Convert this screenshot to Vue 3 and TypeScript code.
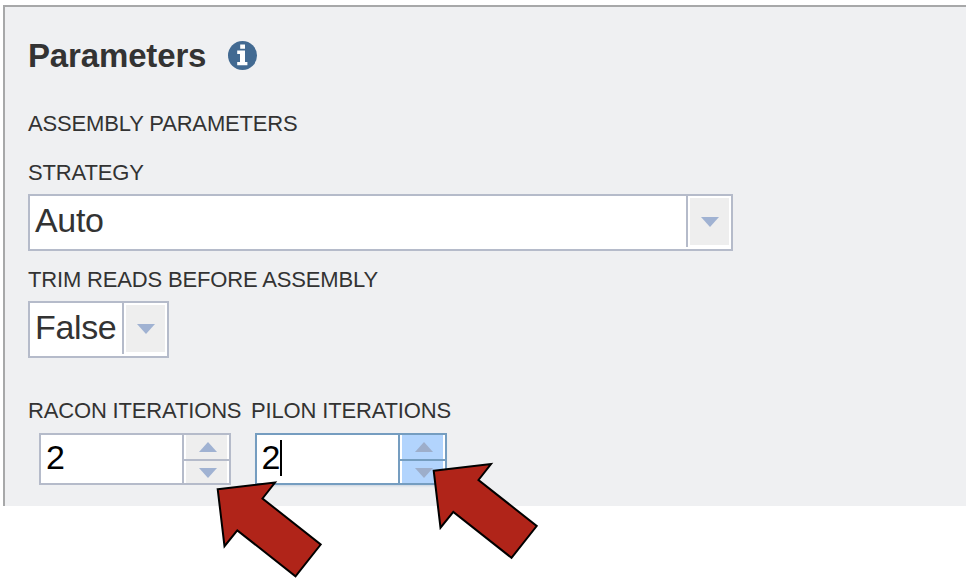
<script setup lang="ts">
import { ref } from 'vue'

interface Choice {
  id: string
  label: string
  value: string
}

interface Counter {
  id: string
  label: string
  value: number
  active: boolean
}

const choices = ref<Choice[]>([
  { id: 'strategy', label: 'STRATEGY', value: 'Auto' },
  { id: 'trim', label: 'TRIM READS BEFORE ASSEMBLY', value: 'False' },
])

const counters = ref<Counter[]>([
  { id: 'racon', label: 'RACON ITERATIONS', value: 2, active: false },
  { id: 'pilon', label: 'PILON ITERATIONS', value: 2, active: true },
])

function step(counter: Counter, amount: number) {
  counter.value = Math.max(0, counter.value + amount)
}
</script>

<template>
  <main class="page">
    <section class="panel">
      <header class="heading">
        <h1 class="title">Parameters</h1>
        <svg class="info" viewBox="0 0 29 29">
          <circle cx="14.5" cy="14.5" r="14.5" />
          <path d="M12.2 3.4h4.8v4.4h-4.8z M9.2 9.6h7.8v11.3h2.4v3.4H9.2v-3.4h2.8v-7.9H9.2z" />
        </svg>
      </header>

      <p class="label section">ASSEMBLY PARAMETERS</p>

      <div v-for="choice in choices" :key="choice.id" class="field" :class="choice.id">
        <span class="label">{{ choice.label }}</span>
        <div class="select">
          <span class="value">{{ choice.value }}</span>
          <span class="divider"></span>
          <button class="drop" type="button">
            <svg class="caret" viewBox="0 0 18 10"><path d="M0 0h18L9 10z" /></svg>
          </button>
        </div>
      </div>

      <div class="counters">
        <div v-for="counter in counters" :key="counter.id" class="counter" :class="[counter.id, { active: counter.active }]">
          <span class="label">{{ counter.label }}</span>
          <div class="spinner">
            <span class="number">{{ counter.value }}<i v-if="counter.active" class="cursor"></i></span>
            <span class="steps">
              <button class="step" type="button" @click="step(counter, 1)">
                <svg class="caret" viewBox="0 0 18 10"><path d="M0 10h18L9 0z" /></svg>
              </button>
              <button class="step down" type="button" @click="step(counter, -1)">
                <svg class="caret" viewBox="0 0 18 10"><path d="M0 0h18L9 10z" /></svg>
              </button>
            </span>
          </div>
        </div>
      </div>
    </section>

    <svg class="pointers" viewBox="0 0 974 586">
      <path d="M217.7 489.2L275 482.5L262.5 498.5L320.7 544.5L295.5 576.3L237.3 530.4L224.5 546.2Z" />
      <path d="M433.7 470.7L491 464L478.5 480L536.7 526L511.5 557.8L453.3 511.9L440.5 527.7Z" />
    </svg>
  </main>
</template>

<style>
body {
  margin: 0;
  background: #fff;
}
</style>

<style scoped>
.page {
  position: relative;
  box-sizing: border-box;
  width: 974px;
  height: 586px;
  padding: 5px 8px 0 3px;
  overflow: hidden;
  font-family: "Liberation Sans", Arial, sans-serif;
  color: #333;
}

.panel {
  box-sizing: border-box;
  height: 501px;
  padding: 29px 0 0 23px;
  border-top: 2px solid #a7a8a9;
  border-left: 2px solid #a7a8a9;
  background: #eff0f2;
}

.heading {
  display: flex;
  gap: 21px;
  height: 40px;
}

.title {
  margin: 0;
  font-size: 33px;
  line-height: 40px;
  font-weight: 700;
  letter-spacing: -0.15px;
  width: 179px;
}

.info {
  width: 29px;
  height: 29px;
  margin-top: 5px;
  fill: #426a92;
}

.info path {
  fill: #fff;
}

.label {
  display: block;
  margin: 0;
  font-size: 22px;
  line-height: 26px;
  letter-spacing: -0.16px;
  white-space: nowrap;
}

.section {
  margin-top: 35px;
}

.field {
  margin-top: 23px;
}

.trim {
  margin-top: 16px;
}

.select {
  box-sizing: border-box;
  display: flex;
  width: 705px;
  height: 57px;
  margin-top: 8px;
  border: 2px solid #b5bbca;
  background: #fff;
}

.trim .select {
  width: 141px;
}

.value {
  flex: 1;
  padding-left: 5px;
  font-size: 34px;
  line-height: 49px;
  letter-spacing: -0.35px;
}

.divider {
  width: 2px;
  height: 51px;
  background: #b5bbca;
}

.drop {
  display: flex;
  align-items: center;
  justify-content: center;
  width: 39px;
  height: 47px;
  margin: 2px 2px 0;
  padding: 0;
  border: 0;
  background: #eee;
}

.caret {
  display: block;
  width: 18px;
  height: 10px;
  fill: #a0b2d2;
}

.counters {
  display: flex;
  margin-top: 40px;
}

.counter {
  width: 223px;
}

.spinner {
  box-sizing: border-box;
  display: flex;
  width: 192px;
  height: 52px;
  margin: 9px 0 0 11px;
  border: 2px solid #b5bbca;
  background: #fff;
}

.pilon .spinner {
  margin-left: 4px;
}

.number {
  display: flex;
  flex: 1;
  padding-left: 5px;
  color: #000;
  font-size: 34px;
  line-height: 45px;
}

.pilon .number {
  padding-left: 4.5px;
}

.cursor {
  width: 2px;
  height: 36px;
  margin-top: 5px;
  background: #000;
}

.steps {
  display: flex;
  flex-direction: column;
  width: 45px;
  border-left: 2px solid #b5bbca;
}

.step {
  box-sizing: border-box;
  display: flex;
  align-items: center;
  justify-content: center;
  height: 24px;
  padding: 0 0 0 3px;
  border: 0;
  border-left: 2px solid #fff;
  border-right: 2px solid #fff;
  background: #eee;
}

.down {
  height: 22px;
  margin-top: 2px;
  padding-top: 1px;
  box-shadow: 0 -2px #b5bbca;
}

.active .spinner,
.active .steps {
  border-color: #759dc0;
}

.active .spinner {
  box-shadow: 0 2px 2px -1px #c9d3df;
}

.active .step {
  background: #b2d4fd;
}

.active .down {
  box-shadow: 0 -2px #759dc0;
}

.active .caret {
  fill: #9daecb;
}

.pointers {
  position: absolute;
  left: 0;
  top: 0;
  width: 974px;
  height: 586px;
  pointer-events: none;
}

.pointers path {
  fill: #b02419;
  stroke: #000;
  stroke-width: 2;
}
</style>
